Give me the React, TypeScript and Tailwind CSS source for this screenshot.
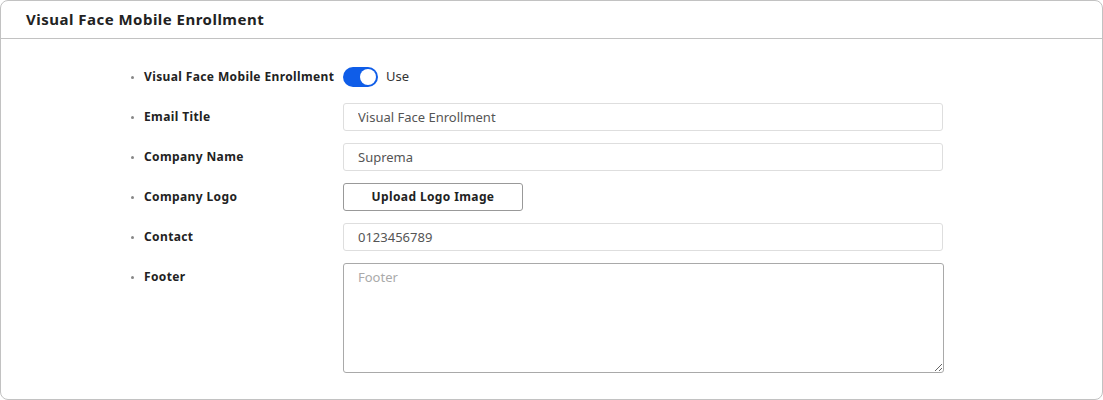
import { useState } from 'react';

const font = { fontFamily: '"Noto Sans", "Open Sans", sans-serif' };

function Label({ text }: { text: string }) {
  return (
    <div className="flex items-center h-7 w-[215px] shrink-0">
      <span className="w-[3px] h-[3px] rounded-full bg-[#888] ml-[3px] mr-[10px]" />
      <span className="text-[12px] font-bold text-[#222] tracking-[0.38px]">{text}</span>
    </div>
  );
}

function TextInput({ value }: { value: string }) {
  return (
    <input
      defaultValue={value}
      className="w-[600px] h-[28px] border border-[#dedede] rounded-[3px] px-[14px] text-[13px] text-[#555] outline-none"
      style={font}
    />
  );
}

export default function App() {
  const [on, setOn] = useState(true);
  return (
    <div className="w-[1103px] h-[400px] bg-white" style={font}>
      <div className="h-full border border-[#c2c2c2] rounded-[8px] flex flex-col">
        <div className="h-[38px] border-b border-[#c2c2c2] flex items-center px-[25px]">
          <h1 className="text-[15px] font-bold text-[#222] tracking-[0.48px]">Visual Face Mobile Enrollment</h1>
        </div>
        <div className="flex flex-col gap-3 pt-[24px] pl-[127px]">
          <div className="flex items-start">
            <Label text="Visual Face Mobile Enrollment" />
            <div className="flex items-center h-7 gap-2">
              <button
                onClick={() => setOn(!on)}
                className={`w-[35px] h-[20px] rounded-full p-[2px] flex ${on ? 'bg-[#0f5de8] justify-end' : 'bg-gray-300 justify-start'}`}
              >
                <span className="w-[16px] h-[16px] rounded-full bg-white" />
              </button>
              <span className="text-[13px] text-[#333]">Use</span>
            </div>
          </div>
          <div className="flex items-start">
            <Label text="Email Title" />
            <TextInput value="Visual Face Enrollment" />
          </div>
          <div className="flex items-start">
            <Label text="Company Name" />
            <TextInput value="Suprema" />
          </div>
          <div className="flex items-start">
            <Label text="Company Logo" />
            <button className="w-[180px] h-[28px] border border-[#999] rounded-[3px] bg-white text-[12px] font-bold text-[#222] tracking-[0.38px]">
              Upload Logo Image
            </button>
          </div>
          <div className="flex items-start">
            <Label text="Contact" />
            <TextInput value="0123456789" />
          </div>
          <div className="flex items-start">
            <Label text="Footer" />
            <textarea
              placeholder="Footer"
              className="w-[601px] h-[110px] border border-[#a9a9a9] rounded-[3px] px-[14px] py-[4px] text-[13px] text-[#555] placeholder:text-[#aaa] outline-none"
              style={font}
            />
          </div>
        </div>
      </div>
    </div>
  );
}
